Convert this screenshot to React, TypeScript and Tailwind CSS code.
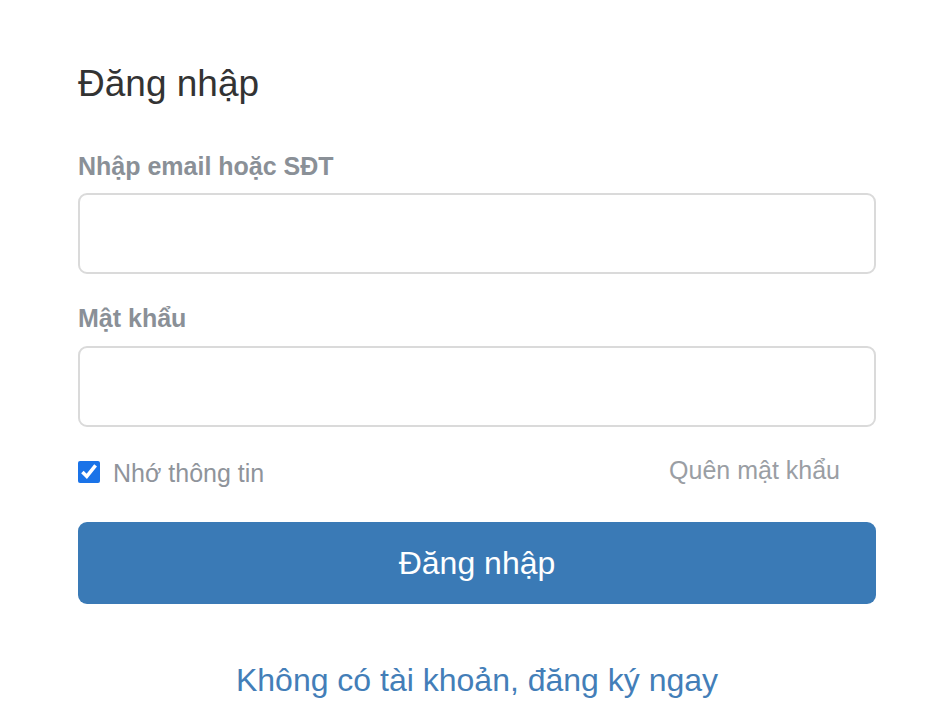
import { useState } from "react";

const LoginPage = () => {
    const [remember, setRemember] = useState(true);

    return (
        <div className="min-h-screen bg-white font-['Liberation_Sans',Arial,sans-serif]">
            <div className="ml-[78px] w-[798px] pt-[62px]">
                <h1 className="text-[37px] leading-[44px] text-[#333333]">Đăng nhập</h1>

                <form onSubmit={e => e.preventDefault()}>
                    <label htmlFor="login-user" className="mt-[45px] block text-[25px] leading-[30px] font-bold text-[#8a9097]">
                        Nhập email hoặc SĐT
                    </label>
                    <input
                        id="login-user"
                        type="text"
                        className="mt-[12px] block h-[81px] w-full rounded-[9px] border-2 border-[#dadada] px-4 text-[24px] focus:outline-none"
                    />

                    <label htmlFor="login-pass" className="mt-[29px] block text-[25px] leading-[30px] font-bold text-[#8a9097]">
                        Mật khẩu
                    </label>
                    <input
                        id="login-pass"
                        type="password"
                        className="mt-[13px] block h-[81px] w-full rounded-[9px] border-2 border-[#dadada] px-4 text-[24px] focus:outline-none"
                    />

                    <div className="mt-[34px] flex h-[22px] items-center justify-between pr-[36px]">
                        <label className="flex items-center gap-[13px] text-[25px] leading-[22px] text-[#8f949b]">
                            <input
                                type="checkbox"
                                checked={remember}
                                onChange={e => setRemember(e.target.checked)}
                                className="m-0 h-[22px] w-[22px] accent-[#1a73e8]"
                            />
                            <span className="pt-[2px]">Nhớ thông tin</span>
                        </label>
                        <a href="#" className="-mt-[4px] text-[25px] leading-[22px] text-[#9a9ea4]">Quên mật khẩu</a>
                    </div>

                    <button
                        type="submit"
                        className="mt-[39px] block h-[82px] w-full rounded-[9px] bg-[#3a7ab6] text-[32px] text-white"
                    >
                        Đăng nhập
                    </button>
                </form>

                <p className="mt-[56px] text-center text-[32px] leading-[40px]">
                    <a href="#" className="text-[#437eb8]">Không có tài khoản, đăng ký ngay</a>
                </p>
            </div>
        </div>
    );
};

export default LoginPage;
